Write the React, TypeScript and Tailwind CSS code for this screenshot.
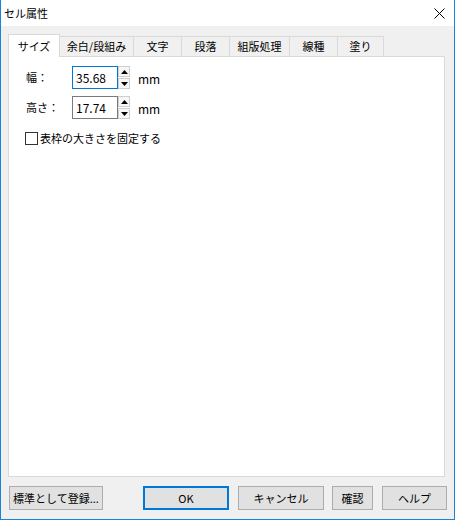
import React from "react";

const font = { fontFamily: '"Noto Sans CJK JP", "Noto Sans", sans-serif' };

function Spinner() {
  return (
    <div className="flex flex-col w-[12px] h-[23px]">
      <div className="flex-1 flex items-center justify-center bg-[#f7f7f7] border border-[#cfcfcf] mb-[1px]">
        <svg width="7" height="4" viewBox="0 0 7 4"><path d="M3.5 0 L7 4 L0 4 Z" fill="#000" /></svg>
      </div>
      <div className="flex-1 flex items-center justify-center bg-[#f7f7f7] border border-[#cfcfcf]">
        <svg width="7" height="4" viewBox="0 0 7 4"><path d="M0 0 L7 0 L3.5 4 Z" fill="#000" /></svg>
      </div>
    </div>
  );
}

function Field({ label, value, focused }: { label: string; value: string; focused?: boolean }) {
  return (
    <div className="flex items-center h-[23px]">
      <div className="w-[63px] pl-[17px] text-[11px] leading-none whitespace-nowrap">{label}</div>
      <div
        className={
          "w-[46px] h-[23px] bg-white flex items-center pl-[3px] text-[12px] leading-none border " +
          (focused ? "border-[#0078d7]" : "border-[#7a7a7a]")
        }
      >
        {value}
      </div>
      <Spinner />
      <div className="ml-[8px] text-[12px] leading-none mt-[2px]">mm</div>
    </div>
  );
}

const tabs: { label: string; w: string }[] = [
  { label: "余白/段組み", w: "w-[74px]" },
  { label: "文字", w: "w-[48px]" },
  { label: "段落", w: "w-[48px]" },
  { label: "組版処理", w: "w-[60px]" },
  { label: "線種", w: "w-[48px]" },
  { label: "塗り", w: "w-[46px]" },
];

function Btn({ label, w, primary }: { label: string; w: string; primary?: boolean }) {
  return (
    <div
      className={
        w +
        " h-[24px] flex items-center justify-center bg-[#e1e1e1] text-[11px] leading-none whitespace-nowrap " +
        (primary ? "border-2 border-[#0078d7]" : "border border-[#adadad]")
      }
    >
      {label}
    </div>
  );
}

export default function App() {
  return (
    <div
      style={font}
      className="w-[455px] h-[520px] flex flex-col border-l border-r border-b border-[#1883d7] bg-[#f0f0f0] text-black"
    >
      <div className="h-[26px] bg-white flex items-center justify-between pl-[3px] pr-[9px]">
        <span className="text-[11px] leading-none">セル属性</span>
        <svg width="11" height="11" viewBox="0 0 11 11">
          <path d="M0.5 0.5 L10.5 10.5 M10.5 0.5 L0.5 10.5" stroke="#000" strokeWidth="1" />
        </svg>
      </div>
      <div className="flex-1 flex flex-col pt-[8px] pl-[7px]">
        <div className="flex items-end h-[22px] relative z-10">
          <div className="w-[52px] h-[23px] mb-[-1px] bg-white border border-b-0 border-[#d9d9d9] flex items-center justify-center text-[11px] leading-none">
            サイズ
          </div>
          {tabs.map((t) => (
            <div
              key={t.label}
              className={
                t.w +
                " h-[20px] border-t border-r border-[#d9d9d9] bg-[#f0f0f0] flex items-center justify-center text-[11px] leading-none whitespace-nowrap"
              }
            >
              {t.label}
            </div>
          ))}
        </div>
        <div className="w-[437px] h-[421px] bg-white border border-[#d9d9d9] flex flex-col pt-[9px]">
          <Field label="幅：" value="35.68" focused />
          <div className="h-[7px]" />
          <Field label="高さ：" value="17.74" />
          <div className="flex items-center mt-[13px] pl-[16px]">
            <div className="w-[13px] h-[13px] border border-[#333] bg-white" />
            <span className="ml-[2px] text-[11px] leading-none">表枠の大きさを固定する</span>
          </div>
        </div>
        <div className="flex items-center mt-[9px] pl-[1px]">
          <Btn label="標準として登録..." w="w-[94px]" />
          <div className="w-[40px]" />
          <Btn label="OK" w="w-[86px]" primary />
          <div className="w-[9px]" />
          <Btn label="キャンセル" w="w-[86px]" />
          <div className="w-[8px]" />
          <Btn label="確認" w="w-[41px]" />
          <div className="w-[9px]" />
          <Btn label="ヘルプ" w="w-[65px]" />
        </div>
      </div>
    </div>
  );
}
